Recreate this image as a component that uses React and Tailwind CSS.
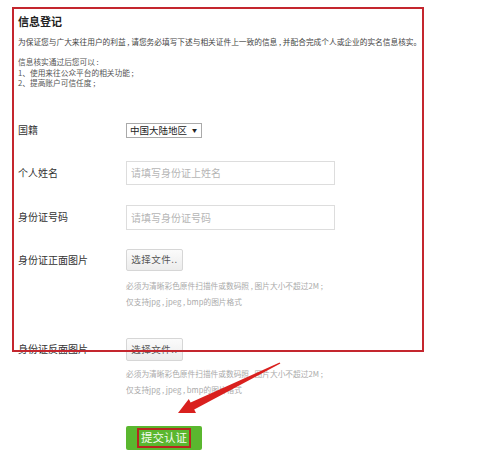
import React from "react";

const font = { fontFamily: '"Noto Sans CJK SC", "Noto Sans", sans-serif' };

const Row = ({ label, children, className = "" }) => (
  <div className={`flex items-center ${className}`}>
    <div className="w-[108px] shrink-0 text-[10px] leading-[12px] text-[#333]">{label}</div>
    {children}
  </div>
);

const FileButton = ({ className = "" }) => (
  <button
    type="button"
    className={`w-[57px] rounded-[2px] border border-[#d6d6d6] bg-gradient-to-b from-[#fbfbfb] to-[#ececec] text-[9.5px] tracking-[0.5px] text-[#555] ${className}`}
  >
    选择文件..
  </button>
);

const Hint = ({ className = "" }) => (
  <div className={`pl-[108px] text-[7.7px] leading-[16px] text-[#aaa] ${className}`}>
    <div>必须为清晰彩色原件扫描件或数码照 , 图片大小不超过2M ;</div>
    <div>仅支持jpg , jpeg , bmp的图片格式</div>
  </div>
);

export default function App() {
  return (
    <div className="relative h-[463px] w-[500px] overflow-hidden bg-white" style={font}>
      <div className="pl-[18px] pt-[14px]">
        <h1 className="h-[14px] text-[11px] font-bold leading-[14px] text-[#222]">信息登记</h1>
        <p className="mt-[8px] h-[12px] whitespace-nowrap text-[7.7px] leading-[12px] text-[#444]">
          为保证您与广大来往用户的利益 , 请您务必填写下述与相关证件上一致的信息 , 并配合完成个人或企业的实名信息核实。
        </p>
        <div className="mt-[9px] text-[7.7px] leading-[10.5px] text-[#555]">
          <div>信息核实通过后您可以 :</div>
          <div>1、使用来往公众平台的相关功能 ;</div>
          <div>2、提高账户可信任度 ;</div>
        </div>

        <Row label="国籍" className="mt-[34px] h-[15px]">
          <div className="flex h-[15px] w-[76px] items-center justify-between border border-[#aaa] bg-white pl-[3px] pr-[4px] text-[9.5px] text-[#222]">
            <span>中国大陆地区</span>
            <span className="text-[5px]">▼</span>
          </div>
        </Row>

        <Row label="个人姓名" className="mt-[23px] h-[24px]">
          <input
            className="h-[24px] w-[209px] border border-[#ddd] px-[4px] text-[10px] outline-none placeholder:text-[#b5b5b5]"
            placeholder="请填写身份证上姓名"
          />
        </Row>

        <Row label="身份证号码" className="mt-[20px] h-[25px]">
          <input
            className="h-[25px] w-[209px] border border-[#ddd] px-[4px] text-[10px] outline-none placeholder:text-[#b5b5b5]"
            placeholder="请填写身份证号码"
          />
        </Row>

        <Row label="身份证正面图片" className="mt-[19px] h-[22px]">
          <FileButton className="h-[22px]" />
        </Row>
        <Hint className="mt-[7px]" />

        <Row label="身份证反面图片" className="mt-[28px] h-[23px]">
          <FileButton className="h-[23px]" />
        </Row>
        <Hint className="mt-[5px]" />

        <div className="mt-[28px] pl-[108px]">
          <button
            type="button"
            className="flex h-[24px] w-[76px] items-center justify-center rounded-[2px] bg-[#5ab72f]"
          >
            <span className="flex h-[20px] w-[54px] items-center justify-center border-2 border-[#b8261f] text-[11.5px] font-normal text-[#f4fbef]">
              提交认证
            </span>
          </button>
        </div>
      </div>

      {/* annotation overlay */}
      <div className="pointer-events-none absolute left-[12px] top-[7px] h-[345px] w-[412px] border-2 border-[#c4262e]" />
      <svg className="pointer-events-none absolute left-0 top-0" width="500" height="463">
        <polygon
          points="279.6,362.4 190.6,402.4 188.8,399 178,413 196,413 194.2,409.6 280.4,363.6"
          fill="#d9201e"
        />
      </svg>
    </div>
  );
}
